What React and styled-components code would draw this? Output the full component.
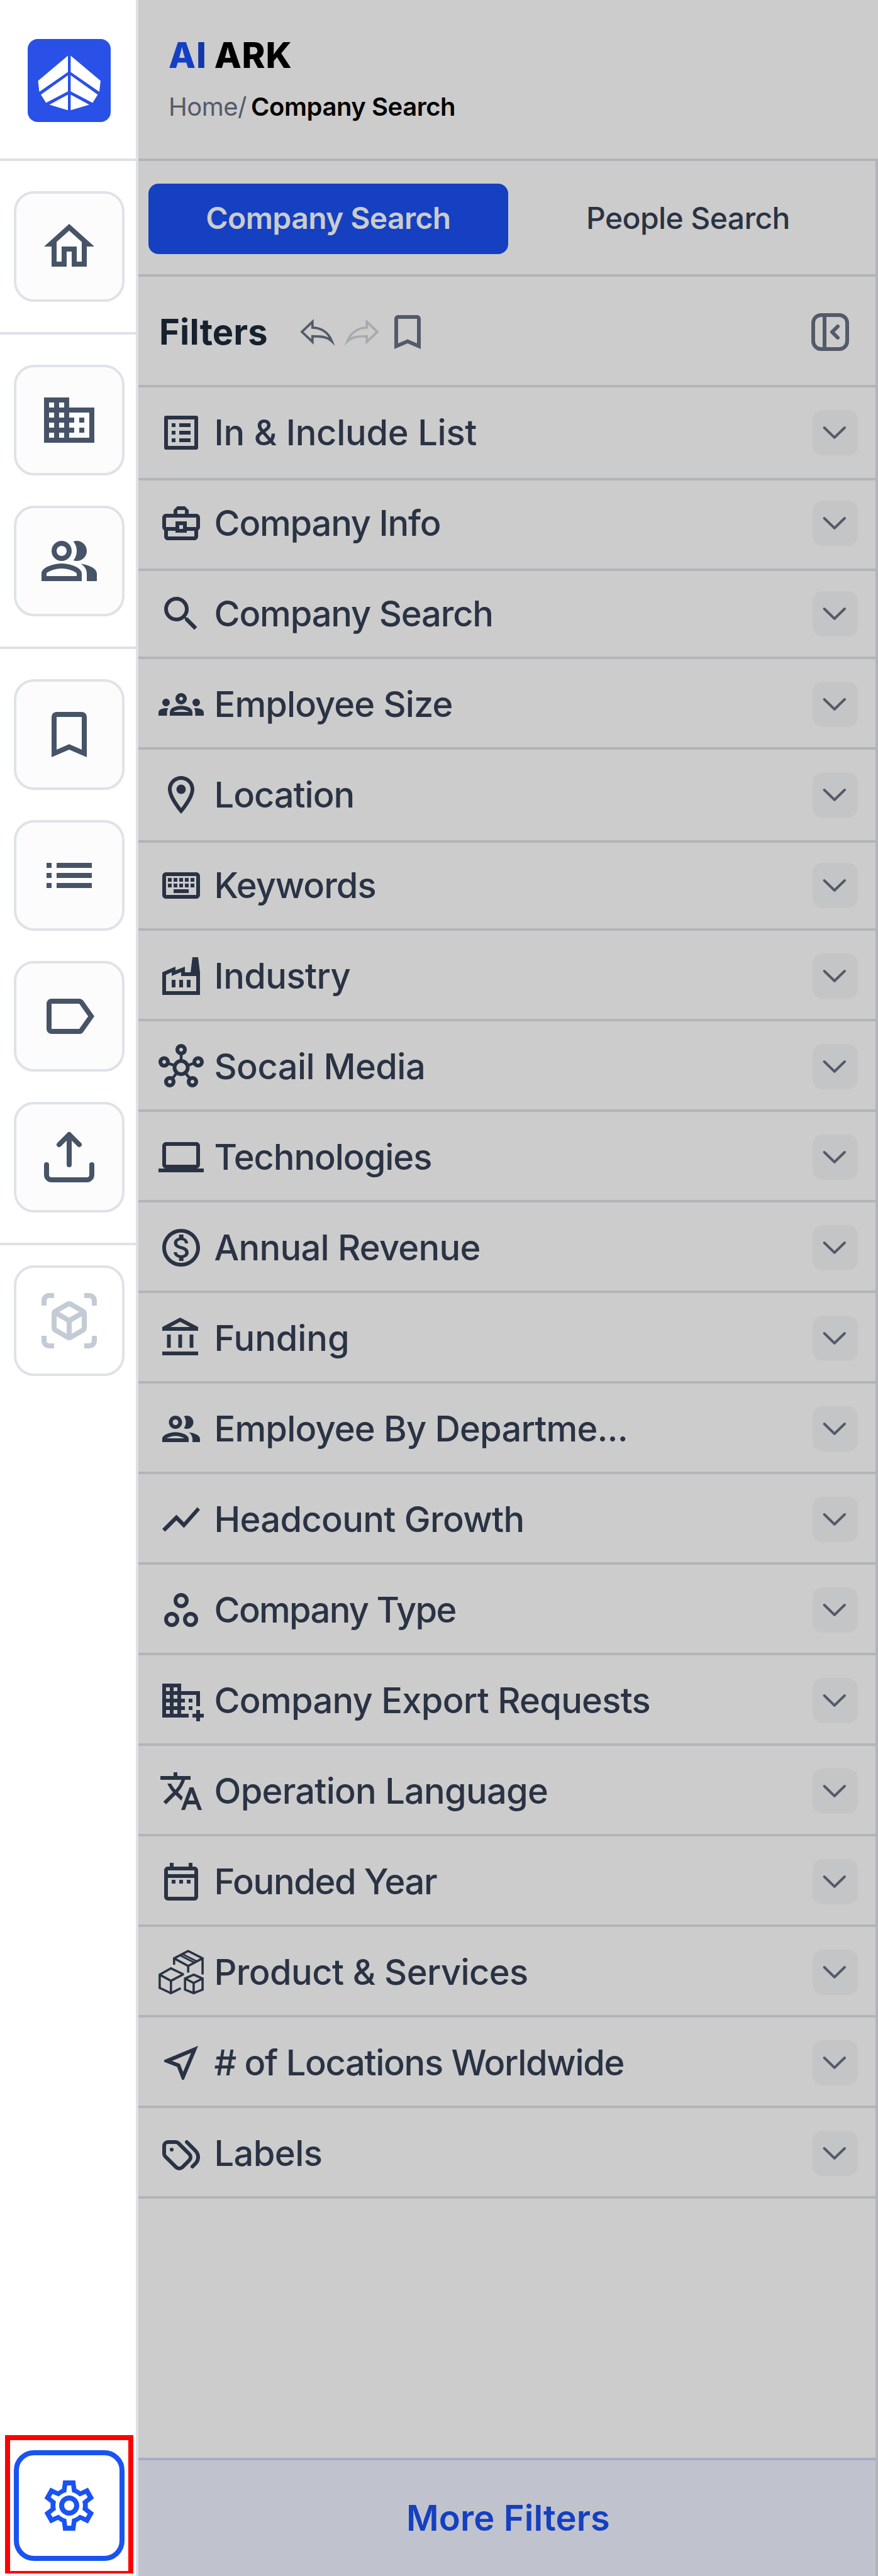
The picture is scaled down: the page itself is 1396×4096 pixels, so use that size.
import React from "react";
import styled, { createGlobalStyle } from "styled-components";
import {
  MdBookmarkBorder,
  MdOutlineAccountBalance,
  MdOutlineBusiness,
  MdOutlineBusinessCenter,
  MdOutlineComputer,
  MdOutlineDateRange,
  MdOutlineDomainAdd,
  MdOutlineFactory,
  MdOutlineGroups,
  MdOutlineHome,
  MdOutlineHub,
  MdOutlineKeyboard,
  MdOutlineLabel,
  MdOutlineListAlt,
  MdOutlineLocationOn,
  MdOutlineMonetizationOn,
  MdOutlineNearMe,
  MdOutlinePeople,
  MdOutlinePeopleAlt,
  MdOutlineViewInAr,
  MdList,
  MdSearch,
  MdShowChart,
  MdTranslate,
} from "react-icons/md";
import { TbTags } from "react-icons/tb";

const LogoMark = () => (
  <svg viewBox="0 0 132 132" width="132" height="132" fill="#fff">
    <path d="M64 26.5V52.5L18.5 84L16.5 66.5ZM64 57.8V83.2L29.2 101.4L21 88.6ZM64 88.4V113.2L34.5 104.6Z" />
    <path d="M68.4 26.5V52.5L113.9 84L115.9 66.5ZM68.4 57.8V83.2L103.2 101.4L111.4 88.6ZM68.4 88.4V113.2L97.9 104.6Z" />
  </svg>
);

const UploadIcon = () => (
  <svg viewBox="0 0 24 24" fill="none" stroke="currentColor" strokeWidth="2" strokeLinecap="round" strokeLinejoin="round">
    <path d="M3 15v4a2 2 0 0 0 2 2h14a2 2 0 0 0 2-2v-4M12 15V3M8 7l4-4 4 4" />
  </svg>
);

const GearIcon = () => (
  <svg viewBox="0 0 24 24" fill="currentColor" fillRule="evenodd">
    <path d="M9.6 2H14.4L14.85 5.3L16.5 6.3L19.45 4.9L21.85 9.1L19.4 11V13L21.85 14.9L19.45 19.1L16.5 17.7L14.85 18.7L14.4 22H9.6L9.15 18.7L7.5 17.7L4.55 19.1L2.15 14.9L4.6 13V11L2.15 9.1L4.55 4.9L7.5 6.3L9.15 5.3ZM11.2 4L10.85 6.7C9.7 7 8.75 7.5 7.85 8.4L5.4 7.35L4.65 8.7L6.75 10.35C6.45 11.4 6.45 12.6 6.75 13.65L4.65 15.3L5.4 16.65L7.85 15.6C8.75 16.5 9.7 17 10.85 17.3L11.2 20H12.8L13.15 17.3C14.3 17 15.25 16.5 16.15 15.6L18.6 16.65L19.35 15.3L17.25 13.65C17.55 12.6 17.55 11.4 17.25 10.35L19.35 8.7L18.6 7.35L16.15 8.4C15.25 7.5 14.3 7 13.15 6.7L12.8 4Z" />
    <path d="M12 8a4 4 0 1 0 0 8a4 4 0 1 0 0-8ZM12 10a2 2 0 1 1 0 4a2 2 0 1 1 0-4Z" />
  </svg>
);

const UndoIcon = () => (
  <svg viewBox="0 0 72 72" fill="none" stroke="currentColor" strokeWidth="3.8" strokeMiterlimit="10">
    <path d="M12 35.6L28.8 19.6V28.8C42 29 54 36 59.5 50.5C53 44 44 42.6 28.8 42.6V51.6Z" />
  </svg>
);

const CollapseIcon = () => (
  <svg viewBox="0 0 24 24" fill="none" stroke="currentColor" strokeWidth="2" strokeLinecap="round" strokeLinejoin="round">
    <rect x="3" y="3" width="18" height="18" rx="4.2" />
    <path d="M9 3v18M16 9l-3 3 3 3" />
  </svg>
);

const ChevronIcon = () => (
  <svg viewBox="0 0 72 72" fill="none" stroke="currentColor" strokeWidth="4" strokeLinecap="round" strokeLinejoin="round">
    <path d="M18.6 28L34.8 43.8L51 28" />
  </svg>
);

const TypeIcon = () => (
  <svg viewBox="0 0 24 24" fill="none" stroke="currentColor" strokeWidth="2">
    <circle cx="12" cy="7" r="3" />
    <circle cx="7" cy="17" r="3" />
    <circle cx="17" cy="17" r="3" />
  </svg>
);

const BoxesIcon = () => (
  <svg viewBox="0 0 72 72" fill="none" stroke="currentColor" strokeWidth="3.6">
    <path d="M24.8 24V13.8L47.2 2.2L70.1 13.8V39.5M24.8 13.8L47.2 26L70.1 13.8M47.2 26V36.5" />
    <path d="M34.4 9.3L56.6 20.6M38.4 7.2L60.6 18.5" strokeWidth="2.8" />
    <path d="M40 39.5L19.8 29.8L1.9 39.8V60.8L19.8 69.3L35.4 61.4M1.9 39.8L19.8 49.6L40 39M19.8 49.6V69.3" />
    <path d="M55.9 39.8L42.2 46V63.6L55.9 69.2L70.1 63.6V46ZM42.2 46L55.9 53L70.1 46M55.9 53V69.2" />
  </svg>
);

const RAIL = [
  [MdOutlineHome],
  [MdOutlineBusiness, MdOutlinePeopleAlt],
  [MdBookmarkBorder, MdList, MdOutlineLabel, UploadIcon],
];

// track: letter spacing, size: row height with its divider, lead: space above the content
const FILTERS = [
  { name: "In & Include List", icon: MdOutlineListAlt, track: -0.25, size: 148 },
  { name: "Company Info", icon: MdOutlineBusinessCenter, track: -1.19, lead: 32 },
  { name: "Company Search", icon: MdSearch, track: -1.16, size: 140, lead: 32 },
  { name: "Employee Size", icon: MdOutlineGroups, track: -0.88 },
  { name: "Location", icon: MdOutlineLocationOn, track: -1.02, size: 148 },
  { name: "Keywords", icon: MdOutlineKeyboard, track: -0.99, size: 140, lead: 32 },
  { name: "Industry", icon: MdOutlineFactory, track: -0.57 },
  { name: "Socail Media", icon: MdOutlineHub, track: -0.56 },
  { name: "Technologies", icon: MdOutlineComputer, track: -1.05 },
  { name: "Annual Revenue", icon: MdOutlineMonetizationOn, track: -0.72 },
  { name: "Funding", icon: MdOutlineAccountBalance, track: -0.07 },
  { name: "Employee By Departme...", icon: MdOutlinePeople, track: -0.82 },
  { name: "Headcount Growth", icon: MdShowChart, track: -0.67 },
  { name: "Company Type", icon: TypeIcon, track: -1.68 },
  { name: "Company Export Requests", icon: MdOutlineDomainAdd, track: -0.72 },
  { name: "Operation Language", icon: MdTranslate, track: -0.76 },
  { name: "Founded Year", icon: MdOutlineDateRange, track: -1.37 },
  { name: "Product & Services", icon: BoxesIcon, track: -0.59 },
  { name: "# of Locations Worldwide", icon: MdOutlineNearMe, track: -1.31 },
  { name: "Labels", icon: TbTags, track: -0.58 },
];

function Sidebar() {
  return (
    <Rail>
      <LogoCell>
        <Logo>
          <LogoMark />
        </Logo>
      </LogoCell>
      {RAIL.map((icons, i) => (
        <RailGroup key={i}>
          {icons.map((Icon, j) => (
            <RailButton key={j}>
              <Icon />
            </RailButton>
          ))}
        </RailGroup>
      ))}
      <RailGroup $last>
        <RailButton $disabled>
          <MdOutlineViewInAr />
        </RailButton>
      </RailGroup>
      <Highlight>
        <RailButton $active>
          <GearIcon />
        </RailButton>
      </Highlight>
    </Rail>
  );
}

function App() {
  return (
    <Page>
      <GlobalStyle />
      <Sidebar />
      <Main>
        <Header>
          <Brand>
            <BrandAccent>AI</BrandAccent>
            <span>ARK</span>
          </Brand>
          <Breadcrumb>
            <HomeLink>Home/</HomeLink>
            <Current>Company Search</Current>
          </Breadcrumb>
        </Header>
        <Panel>
          <Tabs>
            <Tab $active>Company Search</Tab>
            <Tab>People Search</Tab>
          </Tabs>
          <FilterBar>
            <Title>Filters</Title>
            <Tool>
              <UndoIcon />
            </Tool>
            <Tool $muted $flip>
              <UndoIcon />
            </Tool>
            <Tool>
              <MdBookmarkBorder />
            </Tool>
            <Tool $end>
              <CollapseIcon />
            </Tool>
          </FilterBar>
          {FILTERS.map(({ name, icon: Icon, track, size, lead }) => (
            <FilterRow key={name} $size={size} $lead={lead}>
              <Icon />
              <FilterName $track={track}>{name}</FilterName>
              <Toggle>
                <ChevronIcon />
              </Toggle>
            </FilterRow>
          ))}
          <MoreFilters>More Filters</MoreFilters>
        </Panel>
      </Main>
    </Page>
  );
}

const GlobalStyle = createGlobalStyle`
  *, *::before, *::after {
    box-sizing: border-box;
  }

  body {
    margin: 0;
    background: #fff;
    font-family: Inter, "Liberation Sans", sans-serif;
  }

  button {
    font: inherit;
    border: 0;
    padding: 0;
    background: none;
  }

  svg {
    display: block;
    flex: none;
  }
`;

const Page = styled.div`
  display: flex;
  width: 1396px;
  height: 4096px;
`;

const Rail = styled.aside`
  display: flex;
  flex-direction: column;
  width: 220px;
  flex: none;
  background: #fff;
  border-right: 4px solid #dee2e7;
`;

const LogoCell = styled.div`
  height: 256px;
  padding: 62px 0 0 44px;
  border-bottom: 4px solid #dee2e7;
`;

const Logo = styled.div`
  width: 132px;
  height: 132px;
  border-radius: 16px;
  background: #2950e7;
`;

const RailGroup = styled.div`
  display: flex;
  flex-direction: column;
  gap: 48px;
  padding: ${({ $last }) => ($last ? "32px" : "48px")} 18px 48px 22px;
  border-bottom: ${({ $last }) => ($last ? "0" : "4px solid #dee2e7")};
`;

const RailButton = styled.button`
  display: flex;
  align-items: center;
  justify-content: center;
  width: 176px;
  height: 176px;
  border-radius: 32px;
  border: ${({ $active }) => ($active ? "8px solid #1a53f1" : "4px solid #dfe2e8")};
  background: ${({ $active, $disabled }) => ($active || $disabled ? "#fff" : "#fcfcfd")};
  color: ${({ $active, $disabled }) => ($active ? "#1a53f1" : $disabled ? "#c3cbd5" : "#475467")};

  svg {
    width: 96px;
    height: 96px;
  }
`;

const Highlight = styled.div`
  width: 204px;
  margin: auto 0 4px 8px;
  padding: 16px 6px;
  border: 8px solid #f00;
  border-bottom-width: 4px;
  box-shadow: 0 4px 0 #f5f6f7;
`;

const Main = styled.main`
  display: flex;
  flex-direction: column;
  flex: 1;
  background: #ccc;
`;

const Header = styled.header`
  display: flex;
  flex-direction: column;
  gap: 22px;
  height: 256px;
  padding: 56px 48px 0;
  border-bottom: 4px solid #b1b5b9;
`;

const Brand = styled.h1`
  display: flex;
  gap: 12px;
  margin: 0;
  font-size: 56px;
  font-weight: 800;
  line-height: 64px;
  letter-spacing: 0.8px;
  color: #000;
`;

const BrandAccent = styled.span`
  color: transparent;
  background: linear-gradient(90deg, #1440c4 50%, #11339d);
  background-clip: text;
`;

const Breadcrumb = styled.div`
  display: flex;
  font-size: 40px;
  line-height: 56px;
  color: #535b6a;
`;

const HomeLink = styled.span`
  width: 131px;
  font-weight: 400;
  letter-spacing: -0.5px;
`;

const Current = styled.span`
  font-weight: 600;
  letter-spacing: -0.45px;
  color: #000;
`;

const Panel = styled.section`
  display: flex;
  flex-direction: column;
  flex: 1;
  border-right: 4px solid #b1b5b9;
`;

const Tabs = styled.div`
  display: flex;
  height: 184px;
  padding: 36px 12px 32px 16px;
  border-bottom: 4px solid #b1b5b9;
`;

const Tab = styled.button`
  flex: 1;
  padding-bottom: 3px;
  border-radius: 16px;
  font-size: 48px;
  font-weight: ${({ $active }) => ($active ? 600 : 500)};
  letter-spacing: -0.6px;
  color: ${({ $active }) => ($active ? "#ccc" : "#2a3344")};
  background: ${({ $active }) => ($active ? "#1440c1" : "none")};
`;

const FilterBar = styled.div`
  display: flex;
  align-items: center;
  height: 176px;
  padding: 4px 36px 0 33px;
  border-bottom: 4px solid #b1b5b9;
`;

const Title = styled.h2`
  width: 215px;
  margin: 0;
  font-size: 56px;
  font-weight: 700;
  letter-spacing: 0.2px;
  color: #17202d;
`;

const Tool = styled.button`
  color: ${({ $muted }) => ($muted ? "#a7abb0" : "#535b6a")};
  transform: ${({ $flip }) => ($flip ? "scaleX(-1)" : "none")};
  margin-left: ${({ $end }) => ($end ? "auto" : "0")};

  svg {
    width: 72px;
    height: 72px;
  }
`;

const FilterRow = styled.div`
  display: flex;
  align-items: flex-start;
  gap: 16px;
  height: ${({ $size = 144 }) => $size}px;
  padding: ${({ $lead = 36 }) => $lead}px 28px 0 32px;
  border-bottom: 4px solid #b1b5b9;
  color: #2a3344;

  svg {
    width: 72px;
    height: 72px;
  }
`;

const FilterName = styled.span`
  padding-left: 0.5px;
  font-size: 56px;
  font-weight: 500;
  line-height: 72px;
  letter-spacing: ${({ $track }) => $track}px;
  white-space: nowrap;
`;

const Toggle = styled.button`
  width: 72px;
  height: 72px;
  margin-left: auto;
  border-radius: 16px;
  background: #c4c5c7;
  color: #535b6a;
`;

const MoreFilters = styled.button`
  height: 188px;
  margin-top: auto;
  padding-left: 4px;
  border-top: 4px solid #a3adc8;
  background: #c0c3cd;
  color: #1440c1;
  font-size: 56px;
  font-weight: 600;
  letter-spacing: 0.14px;
`;

export default App;
